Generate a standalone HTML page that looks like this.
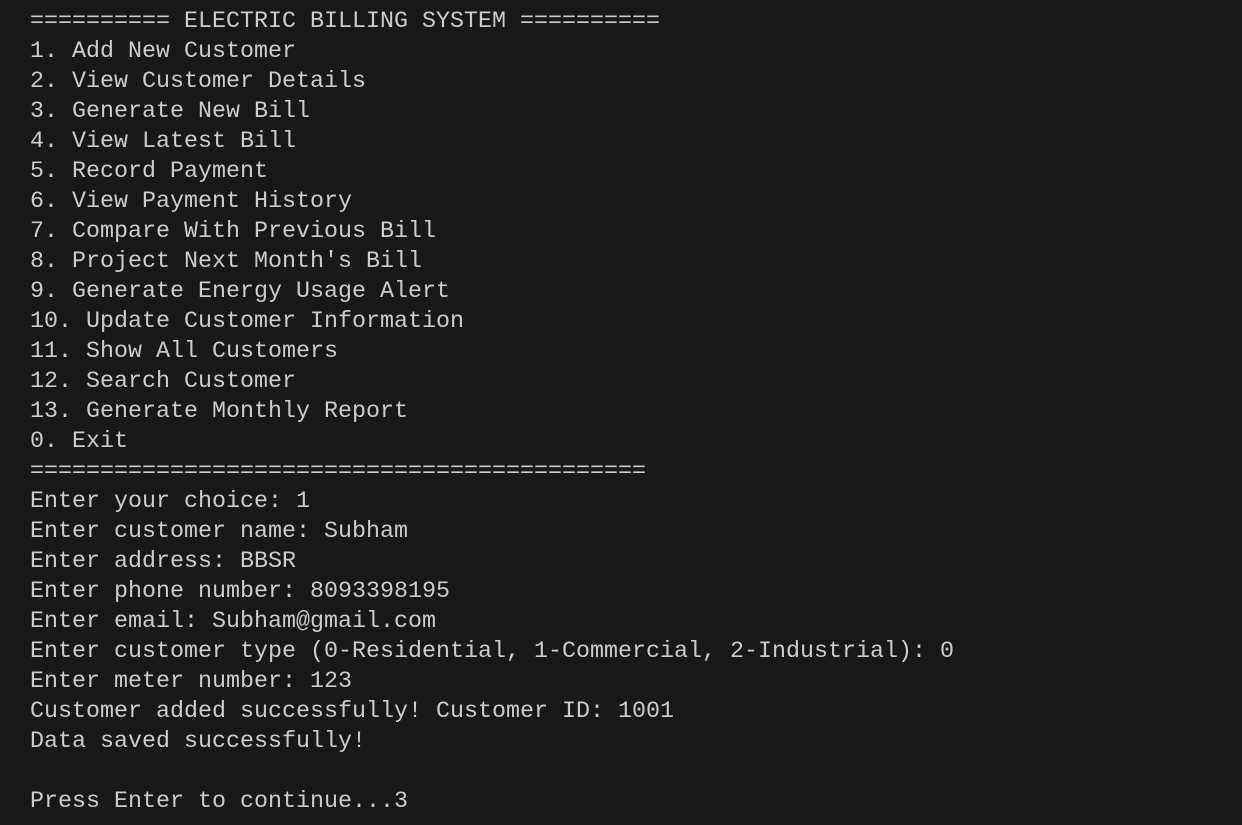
<!DOCTYPE html>
<html><head><meta charset="utf-8"><style>
html,body{margin:0;padding:0;background:#181818;width:1242px;height:825px;overflow:hidden}
pre{margin:0;position:absolute;left:30px;top:7px;font-family:"Liberation Mono","DejaVu Sans Mono",monospace;font-size:23.33px;line-height:30px;color:#cccccc;white-space:pre}
</style></head><body><pre>========== ELECTRIC BILLING SYSTEM ==========
1. Add New Customer
2. View Customer Details
3. Generate New Bill
4. View Latest Bill
5. Record Payment
6. View Payment History
7. Compare With Previous Bill
8. Project Next Month's Bill
9. Generate Energy Usage Alert
10. Update Customer Information
11. Show All Customers
12. Search Customer
13. Generate Monthly Report
0. Exit
============================================
Enter your choice: 1
Enter customer name: Subham
Enter address: BBSR
Enter phone number: 8093398195
Enter email: Subham@gmail.com
Enter customer type (0-Residential, 1-Commercial, 2-Industrial): 0
Enter meter number: 123
Customer added successfully! Customer ID: 1001
Data saved successfully!

Press Enter to continue...3</pre></body></html>
